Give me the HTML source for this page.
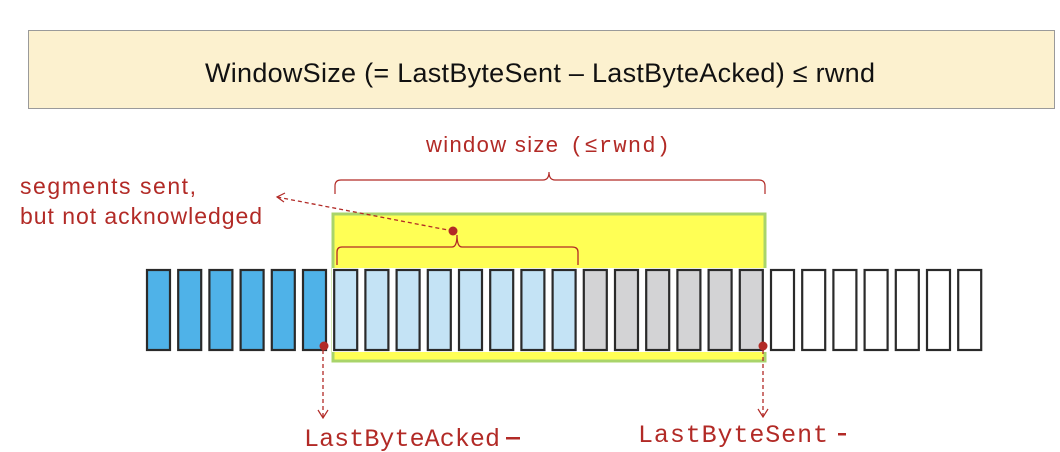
<!DOCTYPE html>
<html><head><style>body{margin:0;background:#fff}svg{display:block}</style></head><body>
<svg width="1060" height="452" xmlns="http://www.w3.org/2000/svg">
<rect x="28.5" y="30.5" width="1026" height="78" fill="#fcf1cf" stroke="#9a9a9a" stroke-width="1"/>
<text x="205" y="82" textLength="670" font-family="Liberation Sans, sans-serif" font-size="27" fill="#111">WindowSize (= LastByteSent – LastByteAcked) ≤ rwnd</text>
<text x="426" y="152" textLength="132" font-family="Liberation Sans, sans-serif" font-size="22" fill="#b22a26">window size</text>
<text x="570" y="152" textLength="100" font-family="Liberation Mono, monospace" font-size="22" fill="#b22a26">(≤rwnd)</text>
<path d="M335 194 V186 Q335 180 341 180 H543 Q549 180 549 172 Q549 180 555 180 H759 Q765 180 765 186 V194" fill="none" stroke="#b22a26" stroke-width="1.2"/>
<text x="20" y="194" textLength="176" font-family="Liberation Sans, sans-serif" font-size="23" fill="#b22a26">segments sent,</text>
<text x="20" y="224" textLength="242" font-family="Liberation Sans, sans-serif" font-size="23" fill="#b22a26">but not acknowledged</text>
<rect x="333" y="214" width="432" height="147" fill="#ffff55" stroke="#a9d46a" stroke-width="3"/>
<rect x="332" y="268" width="435" height="84" fill="#fff"/>
<path d="M453 231 L277 197" stroke="#b22a26" stroke-width="1.3" stroke-dasharray="4,3" fill="none"/>
<path d="M285 193 L277 197 L284 202" stroke="#b22a26" stroke-width="1.2" fill="none"/>
<circle cx="453" cy="231" r="4.5" fill="#b22a26"/>
<path d="M337 265 V252 Q337 247 342 247 H452 Q457 247 457 235 Q457 247 462 247 H572 Q578 247 578 252 V265" fill="none" stroke="#b22a26" stroke-width="1.3"/>
<g stroke="#2a2a2a" stroke-width="2.2">
<rect x="147" y="270" width="23" height="80" fill="#4fb2e8"/>
<rect x="178.2" y="270" width="23" height="80" fill="#4fb2e8"/>
<rect x="209.4" y="270" width="23" height="80" fill="#4fb2e8"/>
<rect x="240.6" y="270" width="23" height="80" fill="#4fb2e8"/>
<rect x="271.8" y="270" width="23" height="80" fill="#4fb2e8"/>
<rect x="303" y="270" width="23" height="80" fill="#4fb2e8"/>
<rect x="334.2" y="270" width="23" height="80" fill="#c4e3f5"/>
<rect x="365.4" y="270" width="23" height="80" fill="#c4e3f5"/>
<rect x="396.6" y="270" width="23" height="80" fill="#c4e3f5"/>
<rect x="427.8" y="270" width="23" height="80" fill="#c4e3f5"/>
<rect x="459" y="270" width="23" height="80" fill="#c4e3f5"/>
<rect x="490.2" y="270" width="23" height="80" fill="#c4e3f5"/>
<rect x="521.4" y="270" width="23" height="80" fill="#c4e3f5"/>
<rect x="552.6" y="270" width="23" height="80" fill="#c4e3f5"/>
<rect x="583.8" y="270" width="23" height="80" fill="#d3d3d5"/>
<rect x="615" y="270" width="23" height="80" fill="#d3d3d5"/>
<rect x="646.2" y="270" width="23" height="80" fill="#d3d3d5"/>
<rect x="677.4" y="270" width="23" height="80" fill="#d3d3d5"/>
<rect x="708.6" y="270" width="23" height="80" fill="#d3d3d5"/>
<rect x="739.8" y="270" width="23" height="80" fill="#d3d3d5"/>
<rect x="771" y="270" width="23" height="80" fill="#fff"/>
<rect x="802.2" y="270" width="23" height="80" fill="#fff"/>
<rect x="833.4" y="270" width="23" height="80" fill="#fff"/>
<rect x="864.6" y="270" width="23" height="80" fill="#fff"/>
<rect x="895.8" y="270" width="23" height="80" fill="#fff"/>
<rect x="927" y="270" width="23" height="80" fill="#fff"/>
<rect x="958.2" y="270" width="23" height="80" fill="#fff"/>
</g>
<circle cx="324" cy="346" r="4.5" fill="#b22a26"/>
<circle cx="763" cy="346" r="4.5" fill="#b22a26"/>
<path d="M323 350 V417 M763 350 V416" stroke="#b22a26" stroke-width="1.3" stroke-dasharray="4,3"/>
<path d="M318 410 L323 418 L328 410 M758 409 L763 417 L768 409" stroke="#b22a26" stroke-width="1.2" fill="none"/>
<text x="304" y="446" textLength="196" font-family="Liberation Mono, monospace" font-size="25" fill="#b22a26">LastByteAcked</text>
<rect x="506" y="437" width="14" height="2.5" fill="#b22a26"/>
<text x="638" y="442" textLength="190" font-family="Liberation Mono, monospace" font-size="25" fill="#b22a26">LastByteSent</text>
<rect x="838" y="433" width="8" height="2.5" fill="#b22a26"/>
</svg>
</body></html>
